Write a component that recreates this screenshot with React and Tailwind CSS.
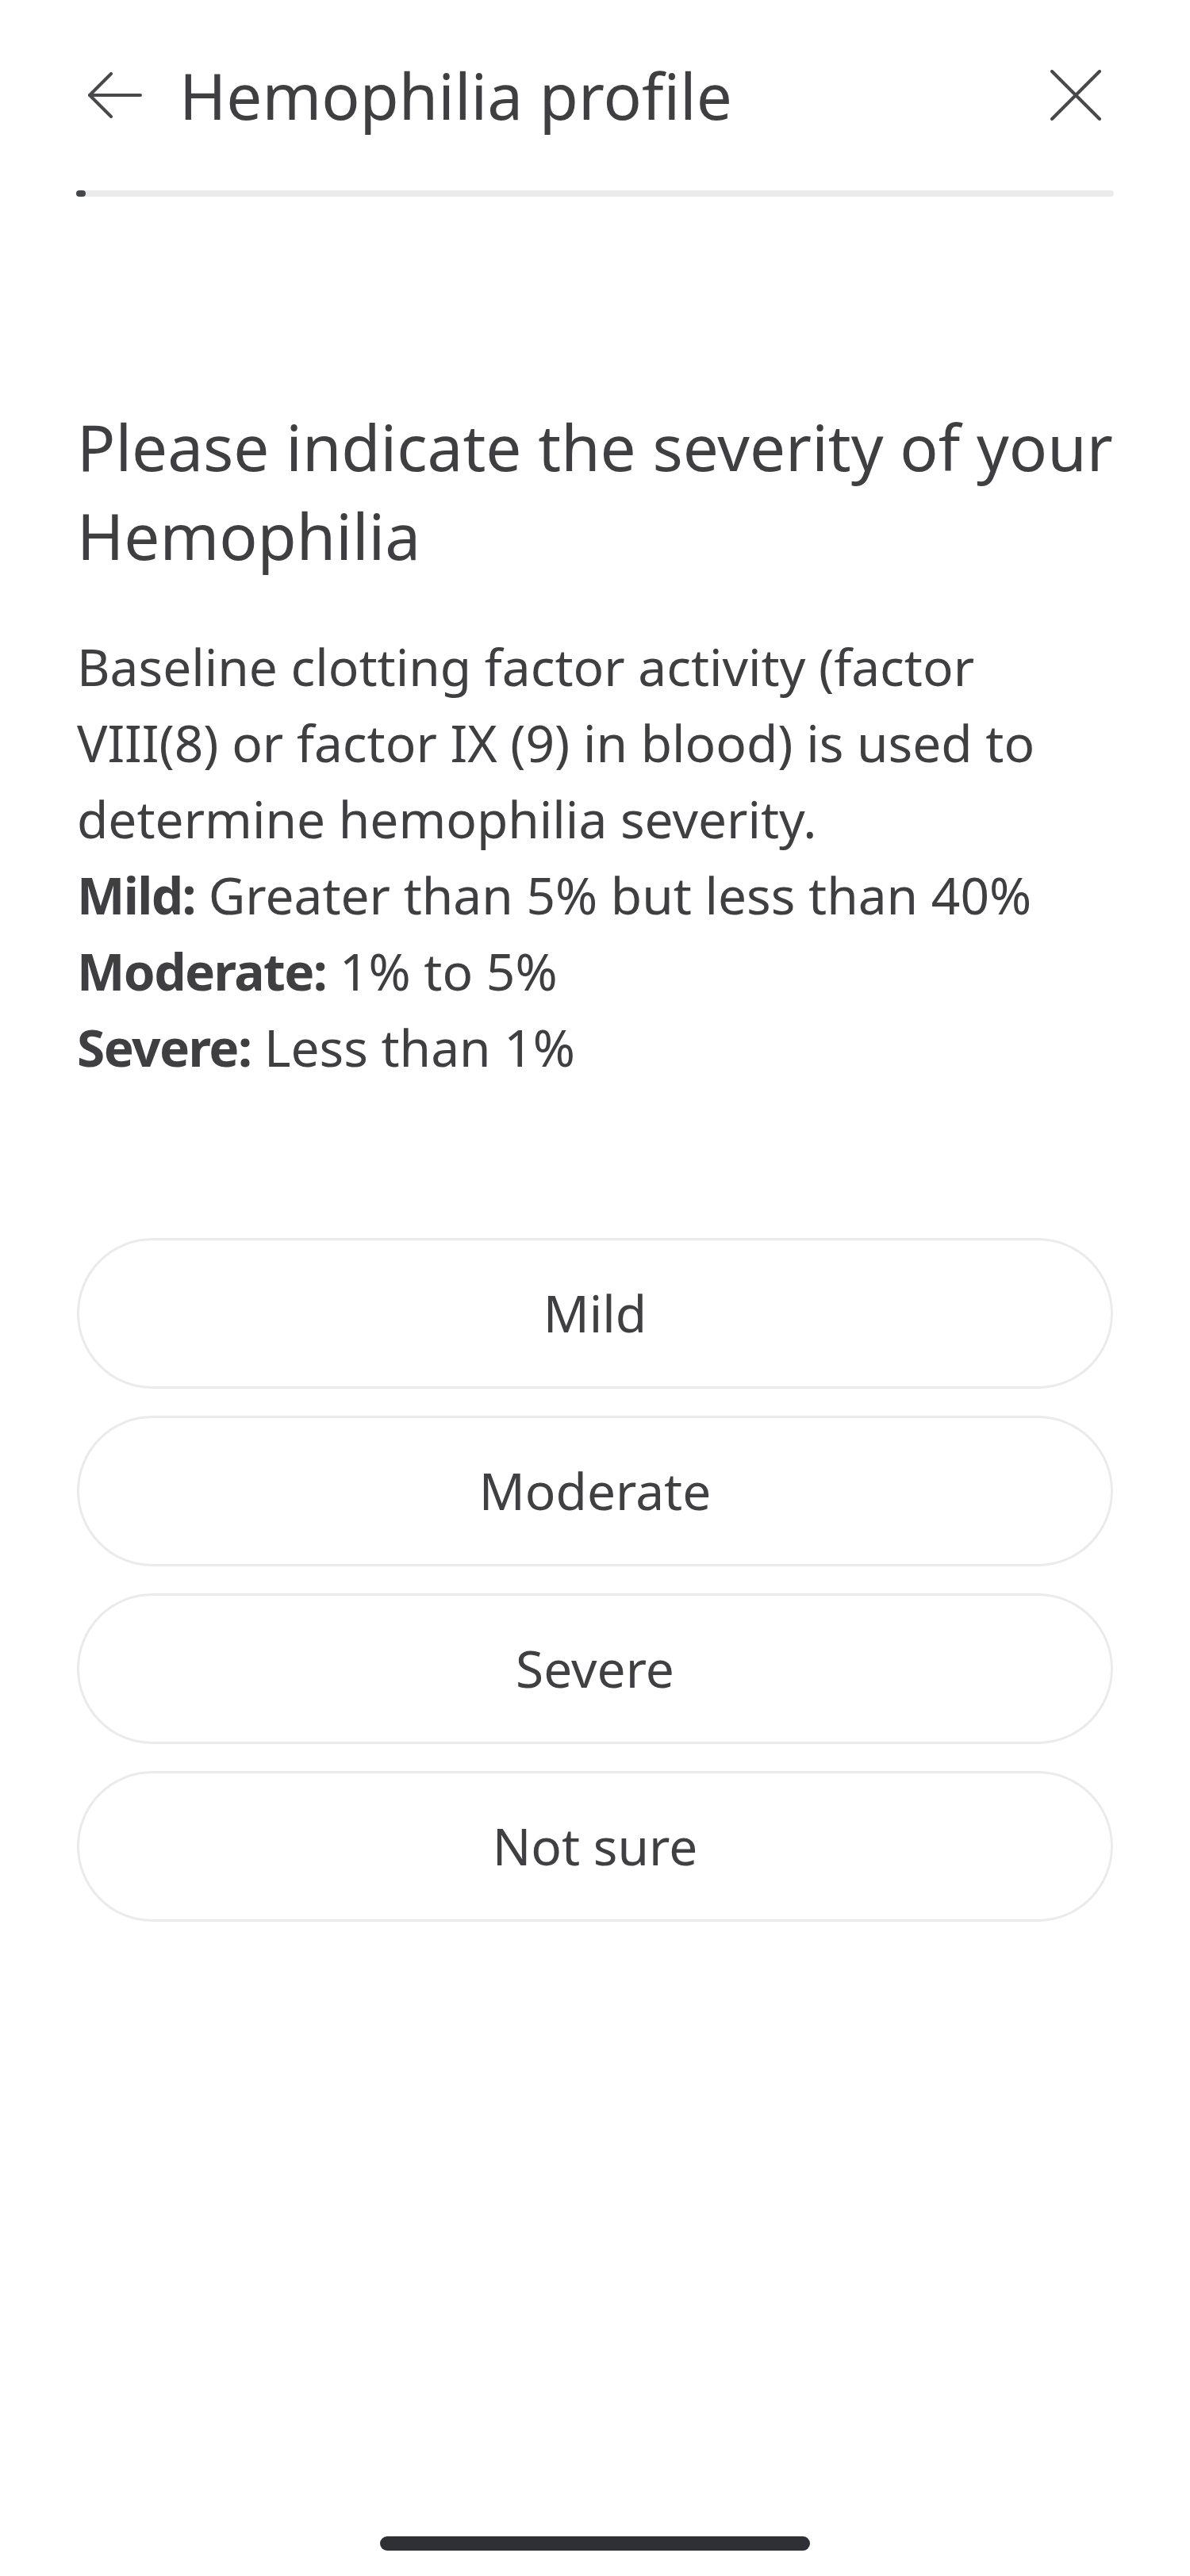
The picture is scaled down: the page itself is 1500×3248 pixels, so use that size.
import React from 'react';

const options = ['Mild', 'Moderate', 'Severe', 'Not sure'];

const BackArrow = () => (
  <svg width="68" height="58" viewBox="0 0 68 58" fill="none" stroke="#48484b" strokeWidth="4" strokeLinecap="round" strokeLinejoin="round">
    <path d="M66 29H2" />
    <path d="M29 2L2 29L29 56" />
  </svg>
);

const CloseIcon = () => (
  <svg width="64" height="64" viewBox="0 0 64 64" fill="none" stroke="#48484b" strokeWidth="4" strokeLinecap="round">
    <path d="M2 2L62 62" />
    <path d="M62 2L2 62" />
  </svg>
);

export default function App() {
  return (
    <div
      className="w-[1500px] h-[3248px] bg-white flex flex-col text-[#3f3f42]"
      style={{ fontFamily: '"Noto Sans", "Open Sans", sans-serif' }}
    >
      {/* Header */}
      <div className="mt-[64px] h-[112px] flex items-center pl-[111px] pr-[112px]">
        <BackArrow />
        <div className="ml-[47px] text-[80px] leading-[112px] flex-1">Hemophilia profile</div>
        <CloseIcon />
      </div>

      {/* Progress */}
      <div className="mt-[64px] mx-[96px] h-[8px] rounded-full bg-[#ebebeb]">
        <div className="w-[12px] h-[8px] rounded-full bg-[#46474b]" />
      </div>

      {/* Question */}
      <div className="mt-[259px] px-[97px]">
        <h1 className="text-[80px] leading-[112px] font-normal">
          <span className="block whitespace-nowrap">Please indicate the severity of your</span>
          <span className="block">Hemophilia</span>
        </h1>
        <div className="mt-[62px] text-[64px] leading-[96px]">
          <p>
            Baseline clotting factor activity (factor VIII(8) or factor IX (9) in blood) is used to determine hemophilia severity.
          </p>
          <p><span className="font-bold tracking-[-1.6px]">Mild:</span> Greater than 5% but less than 40%</p>
          <p><span className="font-bold tracking-[-1.6px]">Moderate:</span> 1% to 5%</p>
          <p><span className="font-bold tracking-[-1.6px]">Severe:</span> Less than 1%</p>
        </div>
      </div>

      {/* Options */}
      <div className="mt-[192px] px-[97px] flex flex-col gap-[34px]">
        {options.map((opt) => (
          <button
            key={opt}
            className="h-[190px] w-full rounded-full border-[3px] border-[#ebebeb] bg-white flex items-center justify-center text-[64px] text-[#404043]"
          >
            {opt}
          </button>
        ))}
      </div>

      {/* Home indicator */}
      <div className="mt-auto mb-[32px] flex justify-center">
        <div className="w-[542px] h-[18px] rounded-full bg-[#2f3035]" />
      </div>
    </div>
  );
}
